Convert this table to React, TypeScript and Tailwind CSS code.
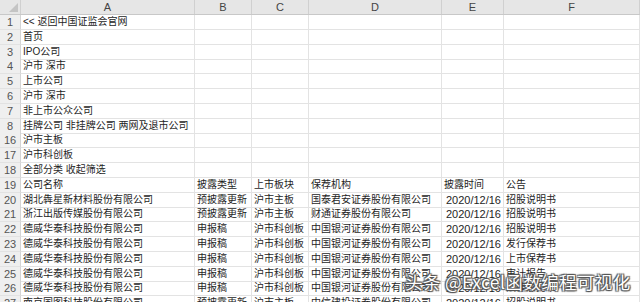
import React from "react";

const cols = ["A", "B", "C", "D", "E", "F"];

type Row = [string, string[]];

const rows: Row[] = [
  ["1", ["<< 返回中国证监会官网", "", "", "", "", ""]],
  ["2", ["首页", "", "", "", "", ""]],
  ["3", ["IPO公司", "", "", "", "", ""]],
  ["4", ["沪市 深市", "", "", "", "", ""]],
  ["5", ["上市公司", "", "", "", "", ""]],
  ["6", ["沪市 深市", "", "", "", "", ""]],
  ["7", ["非上市公众公司", "", "", "", "", ""]],
  ["8", ["挂牌公司 非挂牌公司 两网及退市公司", "", "", "", "", ""]],
  ["16", ["沪市主板", "", "", "", "", ""]],
  ["17", ["沪市科创板", "", "", "", "", ""]],
  ["18", ["全部分类 收起筛选", "", "", "", "", ""]],
  ["19", ["公司名称", "披露类型", "上市板块", "保荐机构", "披露时间", "公告"]],
  ["20", ["湖北犇星新材料股份有限公司", "预披露更新", "沪市主板", "国泰君安证券股份有限公司", "2020/12/16", "招股说明书"]],
  ["21", ["浙江出版传媒股份有限公司", "预披露更新", "沪市主板", "财通证券股份有限公司", "2020/12/16", "招股说明书"]],
  ["22", ["德威华泰科技股份有限公司", "申报稿", "沪市科创板", "中国银河证券股份有限公司", "2020/12/16", "招股说明书"]],
  ["23", ["德威华泰科技股份有限公司", "申报稿", "沪市科创板", "中国银河证券股份有限公司", "2020/12/16", "发行保荐书"]],
  ["24", ["德威华泰科技股份有限公司", "申报稿", "沪市科创板", "中国银河证券股份有限公司", "2020/12/16", "上市保荐书"]],
  ["25", ["德威华泰科技股份有限公司", "申报稿", "沪市科创板", "中国银河证券股份有限公司", "2020/12/16", "审计报告"]],
  ["26", ["德威华泰科技股份有限公司", "申报稿", "沪市科创板", "中国银河证券股份有限公司", "2020/12/16", "法律意见书"]],
  ["27", ["南京国图科技股份有限公司", "预披露更新", "沪市主板", "中信建投证券股份有限公司", "2020/12/16", "招股说明书"]],
];

const grid = "grid grid-cols-[21px_174px_57px_57px_133px_62px_136px]";

export default function App() {
  return (
    <div
      className="relative w-[640px] h-[302px] overflow-hidden bg-white text-[#1e1e1e]"
      style={{ fontFamily: '"Liberation Sans", "Noto Sans CJK SC", sans-serif' }}
    >
      <div className={`${grid} h-[15px] bg-[#e6e6e6] border-b border-[#c8c8c8]`}>
        <div className="relative border-r border-[#d0d0d0]">
          <div className="absolute right-[2px] bottom-[2px] w-0 h-0 border-l-[9px] border-l-transparent border-b-[9px] border-b-[#c4c4c4]" />
        </div>
        {cols.map((c) => (
          <div
            key={c}
            className="border-r border-[#d0d0d0] text-[11px] leading-[14px] text-center text-[#444]"
          >
            {c}
          </div>
        ))}
      </div>
      {rows.map(([n, cells]) => (
        <div key={n} className={`${grid} h-[14.8px]`}>
          <div className="bg-[#efefef] border-r border-[#d4d4d4] border-b border-b-[#e2e2e2] text-[11px] leading-[14px] text-center text-[#555]">
            {n}
          </div>
          {cells.map((t, i) => (
            <div
              key={i}
              className={`border-r border-b border-[#e3e3e3] leading-[14px] whitespace-nowrap ${
                i === 4 && t !== "披露时间" ? "text-right pr-[2px] text-[11px]" : "pl-[2px] text-[10px]"
              } ${i === 0 ? "overflow-visible" : "overflow-hidden"}`}
            >
              {t}
            </div>
          ))}
        </div>
      ))}
      <div
        className="absolute left-[405px] top-[270px] text-[17.5px] leading-[24px] tracking-[0.4px] whitespace-nowrap text-white"
        style={{
          fontFamily: '"Noto Sans CJK SC", sans-serif',
          textShadow:
            "0 0 1px #444, 1px 1px 1px #555, -1px -1px 1px #555, 1px -1px 1px #555, -1px 1px 1px #555",
        }}
      >
        头条 @Excel函数编程可视化
      </div>
    </div>
  );
}
